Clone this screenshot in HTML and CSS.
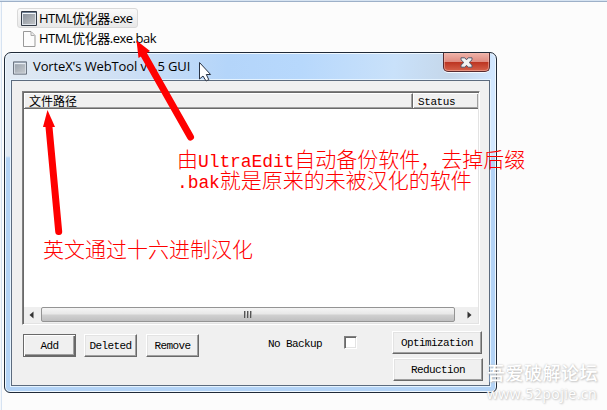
FILE: index.html
```html
<!DOCTYPE html>
<html lang="zh-CN">
<head>
<meta charset="utf-8">
<title>VorteX's WebTool</title>
<link rel="stylesheet" href="styles.css">
</head>
<body>
<main class="desktop">
  <section class="files">
    <div class="file selected">
      <svg class="app-icon" width="16" height="15" viewBox="0 0 16 15"><use href="#app"/></svg>
      <span class="file-name">HTML优化器.exe</span>
    </div>
    <div class="file">
      <svg class="app-icon" width="16" height="16" viewBox="0 0 16 16"><path d="M2.500 .5h7.500l4 4v11H2.500z" fill="#fcfcfc" stroke="#999"/><path d="M10 1v3.500H13.500" fill="#eee" stroke="#aaa"/></svg>
      <span class="file-name">HTML优化器.exe.bak</span>
    </div>
  </section>

  <section class="window">
    <header class="titlebar">
      <svg class="title-icon" width="14" height="14" viewBox="0 0 16 15"><use href="#app"/></svg>
      <h1 class="title">VorteX's WebTool v1.5 GUI</h1>
      <button class="close" aria-label="Close"><svg width="13" height="11" viewBox="0 0 13 11"><path d="M1 .8h3.800l1.700 2 1.700-2H12v2L9.200 5.500 12 8.200v2H8.200L6.500 8.300l-1.700 1.900H1v-2l2.800-2.700L1 2.800z" fill="#f2f2f2" stroke="#54586a"/></svg></button>
    </header>
    <div class="client">
      <div class="list">
        <div class="list-head"><div class="col path">文件路径</div><div class="col status">Status</div></div>
        <div class="list-body"></div>
        <div class="scrollbar">
          <div class="arrow"><svg width="5" height="8" viewBox="0 0 5 8"><path d="M4.500 .5v7L.5 4z" fill="#333"/></svg></div>
          <div class="thumb"><i></i><i></i><i></i></div>
          <div class="arrow"><svg width="5" height="8" viewBox="0 0 5 8"><path d="M.5 .5v7L4.500 4z" fill="#333"/></svg></div>
        </div>
      </div>
      <div class="controls">
        <button class="btn default">Add</button>
        <button class="btn">Deleted</button>
        <button class="btn">Remove</button>
        <label class="backup">No Backup<span class="check"></span></label>
        <div class="actions">
          <button class="btn wide">Optimization</button>
          <button class="btn wide reduction">Reduction</button>
        </div>
      </div>
    </div>
  </section>

  <svg class="overlay" width="607" height="410" viewBox="0 0 607 410">
    <defs>
      <linearGradient id="pane" x1="0" y1="0" x2="1" y2="1"><stop offset="0" stop-color="#8b939d"/><stop offset="1" stop-color="#bfc2c5"/></linearGradient>
      <g id="app"><path d="M.5 .5h15v14H.5z" fill="#dfe5ec" stroke="#343c48"/><path d="M2 3h12v10H2z" fill="url(#pane)"/><path d="M1 1.500h14" stroke="#718296"/><path d="M2 2.500h12" stroke="#f5f8fb"/></g>
    </defs>
    <g fill="red" stroke="red">
      <path d="M144 55L190.500 137" stroke-width="7" stroke-linecap="round"/>
      <path d="M136.500 40.500L150 51l-11.500 7z" stroke="none"/>
      <path d="M49 127L58.700 231.500" stroke-width="7" stroke-linecap="round"/>
      <path d="M47.500 110l7.500 17H43z" stroke="none"/>
    </g>
    <path d="M199.500 62.500v16.500l3.500-3 3 5 2.800-1.300-2.500-5.200h4.300z" fill="#fff" stroke="#293344"/>
  </svg>
  <p class="note note-backup">由<span class="latin">UltraEdit</span>自动备份软件，去掉后缀<br><span class="latin">.bak</span>就是原来的未被汉化的软件</p>
  <p class="note note-hex">英文通过十六进制汉化</p>
  <div class="watermark"><div class="wm-name">吾爱破解论坛</div><div class="wm-url">www.52pojie.cn</div></div>
</main>
</body>
</html>
```

FILE: styles.css
```css
* { box-sizing: border-box; }
body { margin: 0; }
.desktop {
  position: relative;
  width: 607px;
  height: 410px;
  overflow: hidden;
  background: #fcfcfc;
  border-top: 1px solid #d7e4f2;
  box-shadow: inset 0 1px #9db0c8, inset 1px 0 #f4f7fb, inset 2px 0 #d6e3f2;
}
.files { padding: 7px 0 0 17px; }
.file {
  display: flex;
  align-items: center;
  width: 144px;
  height: 21px;
  padding-left: 4px;
  color: #000;
  font: 13px/19px "Open Sans", "Noto Sans CJK SC", sans-serif;
  white-space: nowrap;
}
.selected {
  width: 121px;
  height: 20px;
  padding-left: 3px;
  border: 1px solid #d9d9d9;
  border-radius: 3px;
  background: linear-gradient(#fafafa, #e8e8e8);
}
.app-icon { flex: none; margin-right: 2px; }
.file-name { letter-spacing: -0.5px; }

.window {
  position: absolute;
  left: 4px;
  top: 51px;
  width: 493px;
  height: 341px;
  padding: 0 6px 6px;
  border: 1px solid #202a38;
  border-radius: 7px 7px 6px 6px;
  background: linear-gradient(#d9eaff00 0 103px, #b3d3f6 105px), linear-gradient(95deg, #e2eaf3 0, #cfe0f4 22%, #b4d5fa 43%, #b7d8fc 57%, #c9e1fa 75%, #c5d7ea 86%, #d2e7ff 94%);
  box-shadow: inset 0 0 0 1px #eff8ff;
}
.titlebar { display: flex; align-items: flex-start; height: 27px; padding-left: 2px; }
.title-icon { margin: 8px 6px 0 0; opacity: .8; }
.title {
  flex: 1;
  margin: 4px 0 0;
  font: 13px/18px "Open Sans", sans-serif;
  letter-spacing: -0.12px;
  white-space: nowrap;
}
.close {
  display: grid;
  place-items: center;
  width: 47px;
  height: 19px;
  padding: 0;
  border: 1px solid #582b30;
  border-top: 0;
  border-radius: 0 0 5px 5px;
  background: linear-gradient(#efb3aa, #df8c81 48%, #bd3522 52%, #d5614a);
  box-shadow: inset 0 0 0 1px #f5bdb088, 0 1px #f6faff;
}
.client {
  height: 306px;
  padding: 10px 9px 0 10px;
  border: 1px solid #5c6b7e;
  background: #f0f0f0;
  box-shadow: 0 0 0 1px #e5f3ff;
}
.list {
  display: flex;
  flex-direction: column;
  height: 234px;
  width: 458px;
  border: 1px solid #fff;
  border-top-color: #808080;
  border-left-color: #808080;
  background: #fff;
  box-shadow: inset 1px 1px #696969, inset -1px -1px #e3e3e3;
  padding: 1px;
}
.list-head { display: flex; height: 16px; border-bottom: 1px solid #696969; }
.col {
  border-right: 1px solid #696969;
  border-top: 1px solid #fff;
  border-left: 1px solid #fff;
  background: #f0f0f0;
  box-shadow: inset -1px -1px #a0a0a0;
  color: #000;
}
.path { width: 389px; padding-left: 4px; font: 12px/13px "Noto Sans CJK SC", sans-serif; }
.status { flex: 1; padding-left: 4px; border-right: 0; font: 11px/16px "Liberation Mono", monospace; letter-spacing: -.4px; }
.list-body { flex: 1; }
.scrollbar { display: flex; height: 16px; background: #efefef; }
.arrow { display: grid; place-items: center; width: 15px; }
.arrow + .thumb { margin-left: 2px; }
.arrow:last-child { width: 23px; padding-left: 5px; }
.thumb {
  display: flex;
  flex: 1;
  justify-content: center;
  align-items: center;
  gap: 1px;
  height: 15px;
  border: 1px solid #949494;
  border-radius: 2px;
  background: linear-gradient(#f5f5f5, #e7e7e7 48%, #d1d1d1 52%, #bfbfc0);
}
.thumb i { width: 2px; height: 7px; border-left: 1px solid #555; border-right: 1px solid #aaa; }
.controls { display: flex; align-items: flex-start; width: 461px; padding-top: 7px; }
.btn {
  width: 53px;
  height: 23px;
  margin: 2px 0 0 9px;
  padding: 0;
  border: 1px solid #fff;
  border-right-color: #696969;
  border-bottom-color: #696969;
  background: #f0f0f0;
  box-shadow: inset -1px -1px #a0a0a0, inset 1px 1px #e3e3e3;
  font: 11px/20px "Liberation Mono", monospace;
  letter-spacing: -.6px;
  color: #000;
}
.btn.default { margin: 2px -1px 0 1px; border-color: #696969; box-shadow: inset 1px 1px #fff, inset -1px -1px #696969, inset -2px -2px #a0a0a0; }
.backup {
  display: flex;
  align-items: center;
  margin: 3px 0 0 69px;
  height: 18px;
  color: #000;
  font: 11px/18px "Liberation Mono", monospace;
  letter-spacing: -.6px;
  white-space: nowrap;
}
.check { width: 13px; height: 13px; margin: -4px 0 0 22px; border: 1px solid #fff; border-top-color: #808080; border-left-color: #808080; box-shadow: inset 1px 1px #696969, inset -1px -1px #e3e3e3; background: #fff; }
.actions { margin-left: auto; margin-top: -1px; }
.btn.wide { display: block; width: 90px; height: 23px; margin: 0; }
.btn.wide.reduction { margin: 4px 0 0 1px; }

.overlay { position: absolute; left: 0; top: -1px; }
.note {
  position: absolute;
  margin: 0;
  color: red;
  font: 300 21px/21px "Noto Sans CJK SC", sans-serif;
  white-space: nowrap;
}
.note-backup { left: 177px; top: 147px; }
.note-hex { left: 43px; top: 237px; }
.latin { font: 18px/0 "Liberation Mono", monospace; letter-spacing: -.1px; }
.watermark {
  position: absolute;
  left: 487px;
  top: 359px;
  color: #fff;
  text-shadow: 0 0 2px #bbb, 1px 1px 2px #ccc;
  white-space: nowrap;
}
.wm-name { font: 500 18px/24px "Noto Sans CJK SC", sans-serif; letter-spacing: .5px; }
.wm-url { font: 14px/20px "Open Sans", sans-serif; letter-spacing: .5px; }
```
